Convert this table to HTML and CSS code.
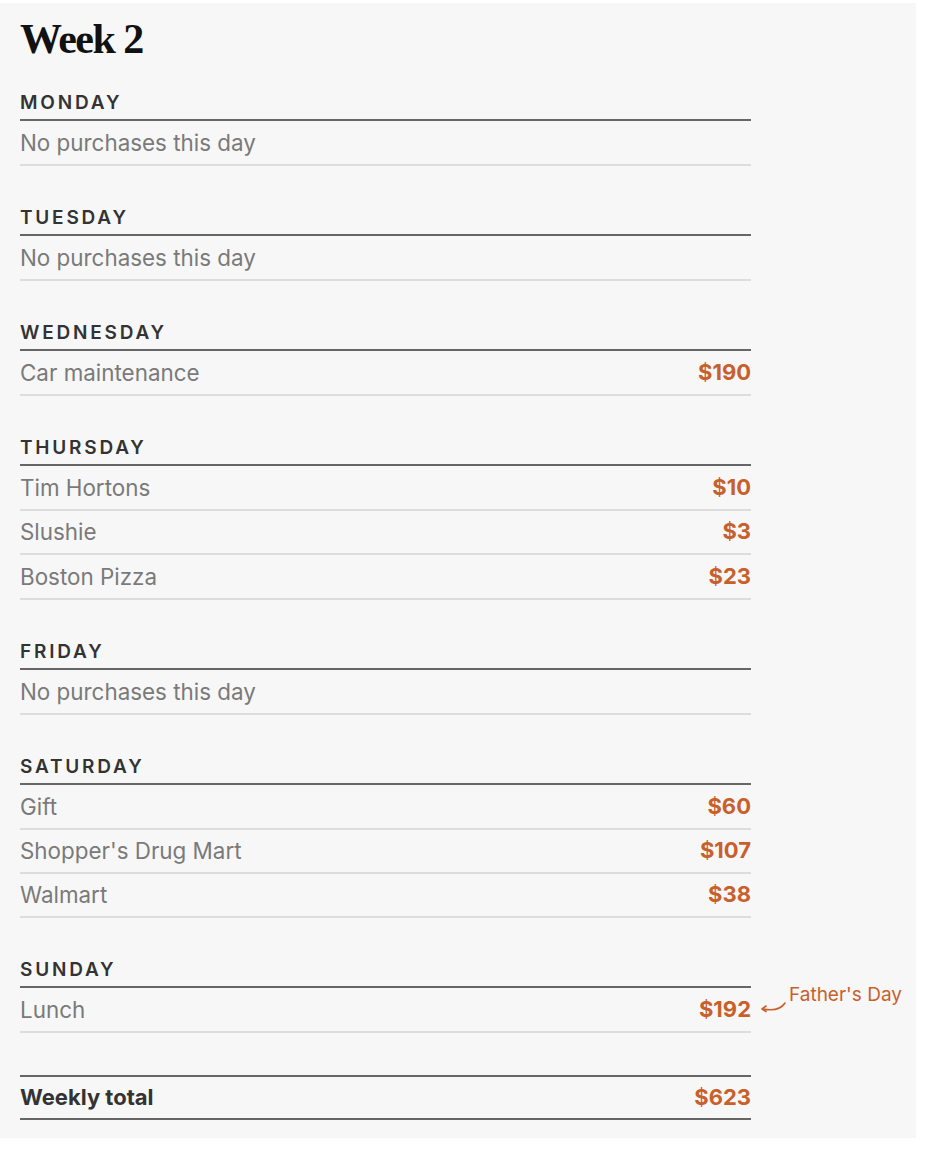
FILE: index.html
```html
<!DOCTYPE html>
<html>
<head>
<meta charset="utf-8">
<link rel="stylesheet" href="styles.css">
</head>
<body>
<div class="panel">
  <h1 class="title">Week 2</h1>

  <section class="day">
    <h2 class="day-name">MONDAY</h2>
    <div class="row"><span class="item">No purchases this day</span></div>
  </section>

  <section class="day">
    <h2 class="day-name">TUESDAY</h2>
    <div class="row"><span class="item">No purchases this day</span></div>
  </section>

  <section class="day">
    <h2 class="day-name">WEDNESDAY</h2>
    <div class="row"><span class="item">Car maintenance</span><span class="amount">$190</span></div>
  </section>

  <section class="day">
    <h2 class="day-name">THURSDAY</h2>
    <div class="row"><span class="item">Tim Hortons</span><span class="amount">$10</span></div>
    <div class="row"><span class="item">Slushie</span><span class="amount">$3</span></div>
    <div class="row"><span class="item">Boston Pizza</span><span class="amount">$23</span></div>
  </section>

  <section class="day">
    <h2 class="day-name">FRIDAY</h2>
    <div class="row"><span class="item">No purchases this day</span></div>
  </section>

  <section class="day">
    <h2 class="day-name">SATURDAY</h2>
    <div class="row"><span class="item">Gift</span><span class="amount">$60</span></div>
    <div class="row"><span class="item">Shopper's Drug Mart</span><span class="amount">$107</span></div>
    <div class="row"><span class="item">Walmart</span><span class="amount">$38</span></div>
  </section>

  <section class="day">
    <h2 class="day-name">SUNDAY</h2>
    <div class="row annotated"><span class="item">Lunch</span><span class="amount">$192</span>
      <div class="note">
        <svg class="note-arrow" width="28" height="16" viewBox="0 0 28 16"><path d="M26 4 C22 10 14 12 4 10" fill="none" stroke="#c8602c" stroke-width="1.6" stroke-linecap="round"/><path d="M7 7 L3 10 L7 12.5" fill="none" stroke="#c8602c" stroke-width="1.6" stroke-linecap="round" stroke-linejoin="round"/></svg>
        <span class="note-text">Father's Day</span>
      </div>
    </div>
  </section>

  <div class="total">
    <span class="total-label">Weekly total</span><span class="amount">$623</span>
  </div>
</div>
</body>
</html>
```

FILE: styles.css
```css
html, body {
  margin: 0;
  padding: 0;
  background: #ffffff;
}

.panel {
  margin-top: 3px;
  width: 916px;
  height: 1135px;
  box-sizing: border-box;
  background: #f7f7f7;
  padding: 11px 0 0 20px;
  font-family: Inter, "Noto Sans", sans-serif;
}

.title {
  margin: 0;
  font-family: "Liberation Serif", "DejaVu Serif", serif;
  font-weight: 700;
  font-size: 42px;
  line-height: 50px;
  letter-spacing: -1.5px;
  color: #111111;
}

.day {
  width: 731px;
  margin-top: 42px;
}

.day:first-of-type {
  margin-top: 29px;
}

.day-name {
  margin: 0;
  font-size: 19px;
  font-weight: 600;
  letter-spacing: 2.8px;
  line-height: 20px;
  color: #333333;
  padding-bottom: 6px;
  border-bottom: 2px solid #666666;
}

.row {
  display: flex;
  justify-content: space-between;
  align-items: center;
  padding: 11px 0;
  line-height: 21px;
  font-size: 22.4px;
  border-bottom: 2px solid #dddddd;
}

.row + .row {
  padding-top: 10.25px;
}

.item {
  color: #7a7a7a;
}

.amount {
  color: #c8602c;
  font-weight: 700;
  font-size: 22px;
}

.annotated {
  position: relative;
}

.note {
  position: absolute;
  left: 739px;
  top: -3px;
  display: flex;
  align-items: flex-start;
  gap: 2px;
}

.note-arrow {
  margin-top: 14px;
}

.note-text {
  color: #c8602c;
  font-size: 19px;
  line-height: 20px;
  white-space: nowrap;
}

.total {
  width: 731px;
  margin-top: 42px;
  display: flex;
  justify-content: space-between;
  align-items: center;
  padding: 10px 0;
  line-height: 21px;
  border-top: 2px solid #666666;
  border-bottom: 2px solid #666666;
}

.total-label {
  font-size: 22px;
  font-weight: 700;
  color: #333333;
}
```
